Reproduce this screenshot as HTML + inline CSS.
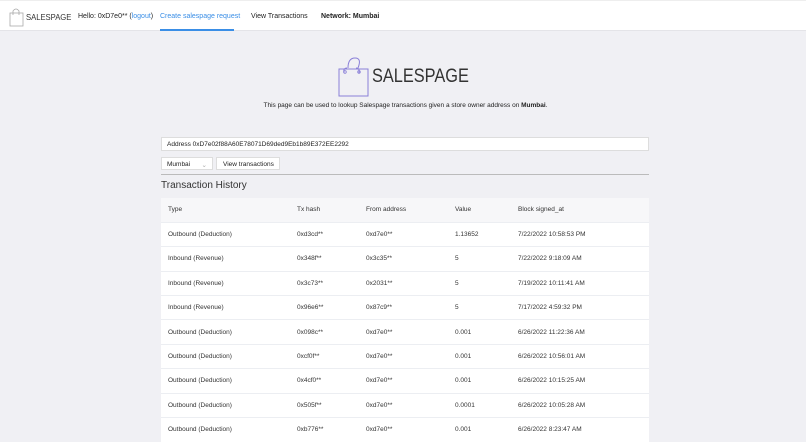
<!DOCTYPE html>
<html><head><style>
*{box-sizing:border-box;margin:0;padding:0}
body{width:806px;height:431px;overflow:hidden;background:#f0f0f4;font-family:"Liberation Sans",sans-serif;font-size:7px;color:#222}
.nav{position:absolute;left:0;top:0;width:806px;height:31px;background:#fff;border-bottom:1px solid #e4e4e8;border-top:1px solid #eee}
.nav span{position:absolute;top:12px;font-size:7px;white-space:nowrap}
.logo{position:absolute;left:338px;top:56px}
.title{position:absolute;left:372px;top:66px;font-size:19px;color:#333;transform:scaleX(.86);transform-origin:left top;white-space:nowrap}
.desc{position:absolute;left:0;width:806px;text-align:center;top:102px;font-size:6.5px;padding-left:5px}
.addr{position:absolute;left:161px;top:137px;width:488px;height:14px;background:#fff;border:1px solid #ddd;font-size:6.5px;padding:3px 5px}
.sel{position:absolute;left:161px;top:157px;width:52px;height:13px;background:#fff;border:1px solid #ddd;font-size:6.5px;padding:3px 5px}
.btn{position:absolute;left:216px;top:157px;width:64px;height:13px;background:#fff;border:1px solid #ddd;font-size:6.5px;padding:3px 6px;white-space:nowrap}
.hr{position:absolute;left:161px;top:174px;width:488px;height:1px;background:#bbb}
.th{position:absolute;left:161px;top:180px;font-size:10px;color:#333}
table{position:absolute;left:161px;top:198px;width:488px;border-collapse:collapse;font-size:6.5px;background:#fff}
td{height:24.4px;padding-left:7px;border-top:1px solid #eceef2;color:#333}
tr.h td{background:#f7f7f9;border-top:none}
</style></head><body>
<div class="nav">
<svg style="position:absolute;left:9px;top:6px" width="16" height="20" viewBox="0 0 16 20"><rect x="1" y="6" width="13" height="13" fill="none" stroke="#aaa" stroke-width="0.8"/><path d="M4 8 V4 Q7 0 10 4 V8" fill="none" stroke="#aaa" stroke-width="0.8"/></svg>
<span style="left:26px;top:11px;font-size:8.5px;color:#333;transform:scaleX(.9);transform-origin:left">SALESPAGE</span>
<span style="left:78px">Hello: 0xD7e0** (<span style="position:static;color:#3a8ee6">logout</span>)</span>
<span style="left:160px;color:#3a8ee6">Create salespage request</span>
<div style="position:absolute;left:160px;top:28px;width:74px;height:2px;background:#3a8ee6"></div>
<span style="left:251px">View Transactions</span>
<span style="left:321px;font-weight:bold">Network: Mumbai</span>
</div>
<svg class="logo" width="32" height="41" viewBox="0 0 32 41"><rect x="1" y="13" width="29" height="27" fill="none" stroke="#8a7fd8" stroke-width="1"/><path d="M6 17 Q5 12 9 12 M10 12 Q10 2 17 2 Q24 2 20 12 M18 12 Q22 12 21 17" fill="none" stroke="#8a7fd8" stroke-width="1"/><circle cx="7" cy="16" r="1.3" fill="none" stroke="#8a7fd8" stroke-width="0.8"/><circle cx="21" cy="16" r="1.3" fill="none" stroke="#8a7fd8" stroke-width="0.8"/></svg>
<div class="title">SALESPAGE</div>
<div class="desc">This page can be used to lookup Salespage transactions given a store owner address on <b>Mumbai</b>.</div>
<div class="addr">Address 0xD7e02f88A60E78071D69ded9Eb1b89E372EE2292</div>
<div class="sel">Mumbai <span style="float:right;color:#aaa">⌄</span></div>
<div class="btn">View transactions</div>
<div class="hr"></div>
<div class="th">Transaction History</div>
<table>
<colgroup><col style="width:129px"><col style="width:69px"><col style="width:89px"><col style="width:63px"><col></colgroup>
<tr class="h"><td>Type</td><td>Tx hash</td><td>From address</td><td>Value</td><td>Block signed_at</td></tr>
<tr><td>Outbound (Deduction)</td><td>0xd3cd**</td><td>0xd7e0**</td><td>1.13652</td><td>7/22/2022 10:58:53 PM</td></tr>
<tr><td>Inbound (Revenue)</td><td>0x348f**</td><td>0x3c35**</td><td>5</td><td>7/22/2022 9:18:09 AM</td></tr>
<tr><td>Inbound (Revenue)</td><td>0x3c73**</td><td>0x2031**</td><td>5</td><td>7/19/2022 10:11:41 AM</td></tr>
<tr><td>Inbound (Revenue)</td><td>0x96e6**</td><td>0x87c9**</td><td>5</td><td>7/17/2022 4:59:32 PM</td></tr>
<tr><td>Outbound (Deduction)</td><td>0x098c**</td><td>0xd7e0**</td><td>0.001</td><td>6/26/2022 11:22:36 AM</td></tr>
<tr><td>Outbound (Deduction)</td><td>0xcf0f**</td><td>0xd7e0**</td><td>0.001</td><td>6/26/2022 10:56:01 AM</td></tr>
<tr><td>Outbound (Deduction)</td><td>0x4cf0**</td><td>0xd7e0**</td><td>0.001</td><td>6/26/2022 10:15:25 AM</td></tr>
<tr><td>Outbound (Deduction)</td><td>0x505f**</td><td>0xd7e0**</td><td>0.0001</td><td>6/26/2022 10:05:28 AM</td></tr>
<tr><td>Outbound (Deduction)</td><td>0xb776**</td><td>0xd7e0**</td><td>0.001</td><td>6/26/2022 8:23:47 AM</td></tr>
</table>
</body></html>
